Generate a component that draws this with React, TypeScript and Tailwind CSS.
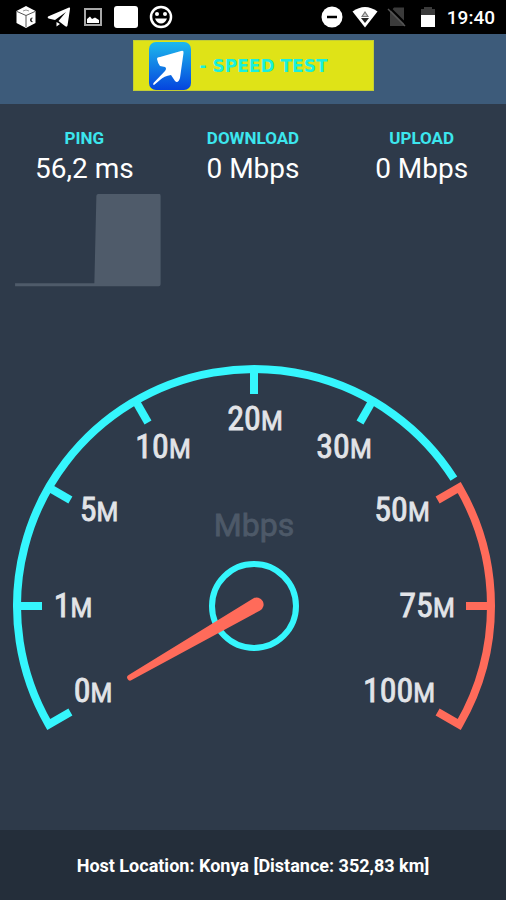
import React from "react";

const CYAN = "#35f6fd";
const CORAL = "#ff6b5a";
const CX = 254;
const CY = 251;
const R = 237;

type Label = { value: string; x: number; y: number };

const labels: Label[] = [
  { value: "0", x: 93, y: 347 },
  { value: "1", x: 73, y: 262 },
  { value: "5", x: 99, y: 166 },
  { value: "10", x: 163, y: 103 },
  { value: "20", x: 255, y: 75 },
  { value: "30", x: 344, y: 103 },
  { value: "50", x: 402, y: 166 },
  { value: "75", x: 427, y: 262 },
  { value: "100", x: 399, y: 347 },
];

function point(angle: number, radius: number) {
  const a = (angle * Math.PI) / 180;
  return `${(CX + radius * Math.cos(a)).toFixed(2)} ${(CY + radius * Math.sin(a)).toFixed(2)}`;
}

function StatusBar() {
  return (
    <div className="flex h-[34px] items-center justify-between bg-black pr-[11px] pl-4 text-white">
      <div className="flex items-center gap-[11px]">
        <svg width="20" height="24" viewBox="0 0 20 24" aria-hidden="true">
          <path d="M10 1 19.500 6 19.500 18 10 23 0.500 18 0.500 6Z" fill="#fff" />
          <path d="M1 6.500 10 10.500 19 6.500M10 10.500V22" stroke="#555" strokeWidth="1" fill="none" />
          <path d="M7 6l3-1 3 1" stroke="#999" fill="none" />
          <path d="M16.500 13c-2.500 0-2.500 4 0 3.500M14.500 15h1.500" stroke="#222" strokeWidth="1.200" fill="none" />
        </svg>
        <svg width="24" height="24" viewBox="0 0 24 24" aria-hidden="true">
          <path d="M22 2.500 1 11.500Q0 12.500 1.500 13.500L8 15 19 7 11.500 16 18 21Q20 22.500 20.500 20.500L23 4Q23.500 2 22 2.500ZM9.500 17V21.500L13 19Z" fill="#fff" />
        </svg>
        <svg width="20" height="20" viewBox="0 0 20 20" className="ml-[1px]" aria-hidden="true">
          <rect x="2" y="2" width="16" height="16" fill="none" stroke="#a8a8a8" strokeWidth="2" />
          <path d="M4 16V12L7 9.500 9 12 12 10.500 16 13V16Z" fill="#fff" />
        </svg>
        <svg width="24" height="24" viewBox="0 0 24 24" aria-hidden="true">
          <rect x="0" y="1" width="24" height="22" rx="3" fill="#fff" />
        </svg>
        <svg width="24" height="24" viewBox="0 0 24 24" aria-hidden="true">
          <circle cx="12" cy="12" r="10" fill="none" stroke="#fff" strokeWidth="2.500" />
          <circle cx="8" cy="9" r="2" fill="#fff" />
          <circle cx="16" cy="9" r="2" fill="#fff" />
          <path d="M6 13.500H18Q16 18.500 12 18.500T6 13.500Z" fill="#fff" />
        </svg>
      </div>
      <div className="flex items-center gap-[9px]">
        <svg width="22" height="22" viewBox="0 0 22 22" aria-hidden="true">
          <circle cx="11" cy="11" r="10.500" fill="#fff" />
          <path d="M6 11H16" stroke="#000" strokeWidth="2.500" />
        </svg>
        <svg width="26" height="22" viewBox="0 0 26 22" aria-hidden="true">
          <path d="M13 21.500 0.500 5.500Q13-3.500 25.500 5.500Z" fill="#fff" />
          <path d="M9 11 13 5 17 11Z" fill="#777" />
          <path d="M9 12H17L13 17Z" fill="#222" />
          <path d="M11 10 13 7 15 10Z" fill="#ccc" />
        </svg>
        <svg width="20" height="22" viewBox="0 0 20 22" aria-hidden="true">
          <path d="M7 1.500H17V20H3V6Z" fill="#3b3b3b" />
          <path d="M2 1 20 19" stroke="#000" strokeWidth="2" />
          <path d="M1 3 18 20" stroke="#555" strokeWidth="1.500" />
        </svg>
        <svg width="16" height="22" viewBox="0 0 16 22" className="ml-1" aria-hidden="true">
          <path d="M4 1H12V3H15V9H1V3H4Z" fill="#3b3b3b" />
          <path d="M1 9H15V21H1Z" fill="#fff" />
        </svg>
        <time className="ml-[2px] pt-[2px] text-[19px] leading-6 font-medium">19:40</time>
      </div>
    </div>
  );
}

function Header() {
  return (
    <header className="flex h-[70px] items-start justify-center bg-[#3d5b7a] pt-[6px]">
      <h1 className="flex h-[51px] w-[241px] items-center gap-[9px] border border-[#c3ce35] bg-[#dfe317] pl-[15px] font-['DejaVu_Sans',sans-serif] text-[17px] leading-6 font-bold text-[#19f0dc]">
        <svg width="42" height="48" viewBox="0 0 42 48" aria-hidden="true">
          <defs>
            <linearGradient id="logo-blue" x1="0" y1="0" x2="0" y2="1">
              <stop offset="0" stopColor="#1db9ed" />
              <stop offset="1" stopColor="#0544de" />
            </linearGradient>
          </defs>
          <rect width="42" height="48" rx="7" fill="url(#logo-blue)" />
          <path d="M32 9Q35 8 34.500 11L31 36Q29 42 26 39L22 33Q15 34 11 38L5 43Q3.500 43 4.500 41L16 29Q18 26 16 25L11 24Q9 22 8 17Q8 15 11 15Z" fill="#fff" />
        </svg>
        <span>- SPEED TEST</span>
      </h1>
    </header>
  );
}

function Stat({ name, value }: { name: string; value: string }) {
  return (
    <div className="text-center">
      <dt className="text-[17px] leading-5 font-bold text-[#3ce6ee]">{name}</dt>
      <dd className="text-[28px] leading-[42px] text-white">{value}</dd>
    </div>
  );
}

function Gauge() {
  return (
    <svg viewBox="0 0 506 385" className="block w-full" role="img" aria-label="Speed gauge in Mbps">
      <g fill="none" strokeWidth="8">
        <path
          d={`M${point(150, 212)}L${point(150, R)}A${R} ${R} 0 0 1 ${point(-32.5, R)}`}
          stroke={CYAN}
        />
        {[180, 210, 240, 270, 300].map((a) => (
          <path key={a} d={`M${point(a, 212)}L${point(a, R)}`} stroke={CYAN} />
        ))}
        <path
          d={`M${point(-30, 212)}L${point(-30, R)}A${R} ${R} 0 0 1 ${point(30, R)}L${point(30, 212)}`}
          stroke={CORAL}
        />
        <path d={`M${point(0, 212)}L${point(0, R)}`} stroke={CORAL} />
      </g>
      <g
        textAnchor="middle"
        className="font-['Roboto_Condensed',Roboto,sans-serif]"
        fill="#e2e4e8"
        stroke="#e2e4e8"
        strokeWidth="0.800"
      >
        {labels.map(({ value, x, y }) => (
          <text key={value} x={x} y={y} fontSize="34">
            {value}
            <tspan fontSize="25" className="font-[Roboto,sans-serif]">M</tspan>
          </text>
        ))}
      </g>
      <text
        x="254"
        y="181"
        textAnchor="middle"
        fontSize="32"
        fill="#4d5968"
        stroke="#4d5968"
        strokeWidth="0.800"
        className="font-[Roboto,sans-serif]"
      >
        Mbps
      </text>
      <circle cx={CX} cy={CY} r="42" fill="none" stroke={CYAN} strokeWidth="6" />
      <g transform={`rotate(150 ${CX} ${CY})`}>
        <path
          d={`M${CX - 3} ${CY - 7}L${CX + 143} ${CY - 3}A3 3 0 0 1 ${CX + 143} ${CY + 3}L${CX - 3} ${CY + 7}A7 7 0 0 1 ${CX - 3} ${CY - 7}Z`}
          fill={CORAL}
        />
      </g>
    </svg>
  );
}

export default function App() {
  return (
    <div className="flex min-h-screen flex-col bg-[#2e3a4a] font-[Roboto,sans-serif]">
      <StatusBar />
      <Header />
      <main className="flex flex-1 flex-col">
        <dl className="grid grid-cols-3 pt-6">
          <Stat name="PING" value="56,2 ms" />
          <Stat name="DOWNLOAD" value="0 Mbps" />
          <Stat name="UPLOAD" value="0 Mbps" />
        </dl>
        <div className="grid grid-cols-3 pt-[3px]">
          <svg viewBox="0 0 168 95" className="block w-full" role="img" aria-label="Ping history">
            <path d="M15 93V90H94L96 3Q96 1 98 1H159Q160 1 160 3V91Q160 93 158 93H95V93H15Z" fill="#4f5b6a" />
          </svg>
        </div>
        <div className="mt-auto mb-[90px]">
          <Gauge />
        </div>
      </main>
      <footer className="flex h-[70px] items-center justify-center bg-[#242e3a] pt-[2px] text-center text-[18px] leading-6 font-bold text-white">
        Host Location: Konya [Distance: 352,83 km]
      </footer>
    </div>
  );
}
